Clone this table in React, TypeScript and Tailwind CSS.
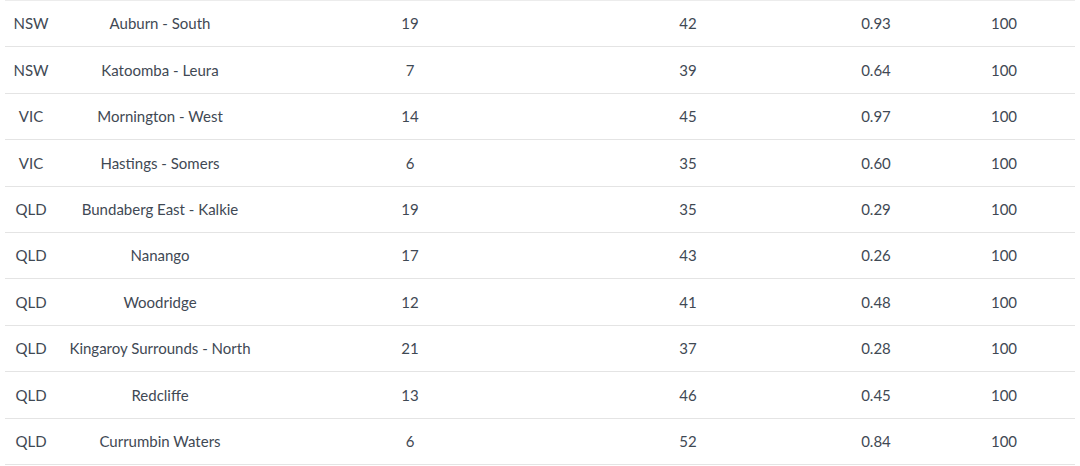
const rows = [
  { state: "NSW", area: "Auburn - South", a: "19", b: "42", ratio: "0.93", pct: "100" },
  { state: "NSW", area: "Katoomba - Leura", a: "7", b: "39", ratio: "0.64", pct: "100" },
  { state: "VIC", area: "Mornington - West", a: "14", b: "45", ratio: "0.97", pct: "100" },
  { state: "VIC", area: "Hastings - Somers", a: "6", b: "35", ratio: "0.60", pct: "100" },
  { state: "QLD", area: "Bundaberg East - Kalkie", a: "19", b: "35", ratio: "0.29", pct: "100" },
  { state: "QLD", area: "Nanango", a: "17", b: "43", ratio: "0.26", pct: "100" },
  { state: "QLD", area: "Woodridge", a: "12", b: "41", ratio: "0.48", pct: "100" },
  { state: "QLD", area: "Kingaroy Surrounds - North", a: "21", b: "37", ratio: "0.28", pct: "100" },
  { state: "QLD", area: "Redcliffe", a: "13", b: "46", ratio: "0.45", pct: "100" },
  { state: "QLD", area: "Currumbin Waters", a: "6", b: "52", ratio: "0.84", pct: "100" },
];

export default function App() {
  return (
    <div className="h-[466px] w-[1080px] bg-white pl-[5px] font-['Lato',sans-serif] text-[15px] text-[#3f4954]">
      <table className="w-[1070px] table-fixed border-collapse border-t border-[#ececec]">
        <colgroup>
          <col className="w-[52px]" />
          <col className="w-[206px]" />
          <col className="w-[294px]" />
          <col className="w-[262px]" />
          <col className="w-[114px]" />
          <col className="w-[142px]" />
        </colgroup>
        <tbody>
          {rows.map((r, i) => (
            <tr key={i} className="h-[46.4px] border-b border-[#e4e4e4] text-center [&>td]:pt-[0px]">
              <td>{r.state}</td>
              <td>{r.area}</td>
              <td>{r.a}</td>
              <td>{r.b}</td>
              <td>{r.ratio}</td>
              <td>{r.pct}</td>
            </tr>
          ))}
        </tbody>
      </table>
    </div>
  );
}
